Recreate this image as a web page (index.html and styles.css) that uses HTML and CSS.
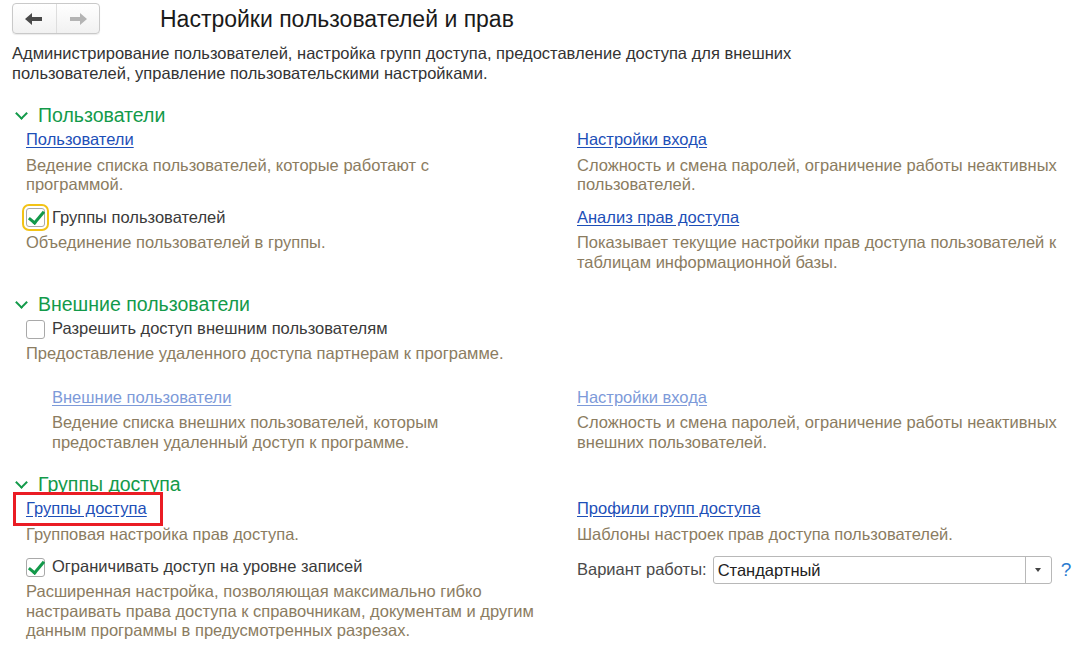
FILE: index.html
```html
<!DOCTYPE html>
<html lang="ru">
<head>
    <meta charset="UTF-8">
    <title>Настройки пользователей и прав</title>
    <link rel="stylesheet" href="styles.css">
</head>
<body>
    <div class="page">
        <div class="topbar">
            <div class="nav">
                <button class="nav-btn">
                    <svg width="18" height="12" viewBox="0 0 18 12"><path d="M0 6 L7 0 L7 4 L17 4 L17 8 L7 8 L7 12 Z" fill="#4a4a4a"/></svg>
                </button>
                <button class="nav-btn">
                    <svg width="18" height="12" viewBox="0 0 18 12"><path d="M18 6 L11 0 L11 4 L1 4 L1 8 L11 8 L11 12 Z" fill="#b4b4b4"/></svg>
                </button>
            </div>
            <h1>Настройки пользователей и прав</h1>
        </div>

        <p class="intro">Администрирование пользователей, настройка групп доступа, предоставление доступа для внешних<br>пользователей, управление пользовательскими настройками.</p>

        <!-- Пользователи -->
        <div class="group">
            <div class="group-title"><span class="chevron"></span>Пользователи</div>
            <div class="cols">
                <div class="col">
                    <div class="item">
                        <a href="#" class="link">Пользователи</a>
                        <p class="hint">Ведение списка пользователей, которые работают с<br>программой.</p>
                    </div>
                    <div class="item">
                        <label class="check focused">
                            <span class="box checked"></span>
                            Группы пользователей
                        </label>
                        <p class="hint">Объединение пользователей в группы.</p>
                    </div>
                </div>
                <div class="col">
                    <div class="item">
                        <a href="#" class="link">Настройки входа</a>
                        <p class="hint">Сложность и смена паролей, ограничение работы неактивных<br>пользователей.</p>
                    </div>
                    <div class="item">
                        <a href="#" class="link">Анализ прав доступа</a>
                        <p class="hint">Показывает текущие настройки прав доступа пользователей к<br>таблицам информационной базы.</p>
                    </div>
                </div>
            </div>
        </div>

        <!-- Внешние пользователи -->
        <div class="group">
            <div class="group-title"><span class="chevron"></span>Внешние пользователи</div>
            <div class="item wide">
                <label class="check">
                    <span class="box"></span>
                    Разрешить доступ внешним пользователям
                </label>
                <p class="hint">Предоставление удаленного доступа партнерам к программе.</p>
            </div>
            <div class="cols spaced">
                <div class="col indent">
                    <div class="item">
                        <a href="#" class="link disabled">Внешние пользователи</a>
                        <p class="hint">Ведение списка внешних пользователей, которым<br>предоставлен удаленный доступ к программе.</p>
                    </div>
                </div>
                <div class="col">
                    <div class="item">
                        <a href="#" class="link disabled">Настройки входа</a>
                        <p class="hint">Сложность и смена паролей, ограничение работы неактивных<br>внешних пользователей.</p>
                    </div>
                </div>
            </div>
        </div>

        <!-- Группы доступа -->
        <div class="group">
            <div class="group-title"><span class="chevron"></span>Группы доступа</div>
            <div class="cols">
                <div class="col">
                    <div class="item">
                        <a href="#" class="link marked">Группы доступа</a>
                        <p class="hint">Групповая настройка прав доступа.</p>
                    </div>
                    <div class="item">
                        <label class="check">
                            <span class="box checked"></span>
                            Ограничивать доступ на уровне записей
                        </label>
                        <p class="hint">Расширенная настройка, позволяющая максимально гибко<br>настраивать права доступа к справочникам, документам и другим<br>данным программы в предусмотренных разрезах.</p>
                    </div>
                </div>
                <div class="col">
                    <div class="item">
                        <a href="#" class="link">Профили групп доступа</a>
                        <p class="hint">Шаблоны настроек прав доступа пользователей.</p>
                    </div>
                    <div class="field">
                        <span class="field-label">Вариант работы:</span>
                        <div class="select">
                            <span class="select-value">Стандартный</span>
                            <span class="select-btn"></span>
                        </div>
                        <span class="help">?</span>
                    </div>
                </div>
            </div>
        </div>
    </div>
</body>
</html>
```

FILE: styles.css
```css
:root {
    --text-color: #333333;
    --hint-color: #8b7c61;
    --green: #139a4a;
    --link: #1d4fb8;
    --link-disabled: #7d9ad9;
}

* {
    margin: 0;
    padding: 0;
    box-sizing: border-box;
}

body {
    font-family: 'Liberation Sans', Arial, sans-serif;
    font-size: 16.5px;
    line-height: 19.5px;
    color: var(--text-color);
    background-color: white;
}

.page {
    padding: 3px 0 0 12px;
}

/* Top bar */
.topbar {
    display: flex;
    align-items: center;
}

.nav {
    display: flex;
    width: 88px;
    height: 31px;
    border: 1px solid #c9c9c9;
    border-radius: 4px;
    background: linear-gradient(#ffffff, #f1f1f1);
    box-shadow: 0 1px 1px rgba(0, 0, 0, 0.08);
}

.nav-btn {
    flex: 1;
    display: flex;
    align-items: center;
    justify-content: center;
    border: none;
    background: transparent;
}

.nav-btn + .nav-btn {
    border-left: 1px solid #dedede;
}

.topbar h1 {
    margin-left: 60px;
    font-size: 23px;
    font-weight: normal;
    color: #1a1a1a;
    line-height: 30px;
}

.intro {
    margin-top: 10px;
    white-space: nowrap;
}

/* Groups */
.group {
    margin-top: 20px;
}

.group-title {
    display: flex;
    align-items: center;
    font-size: 19.5px;
    line-height: 24px;
    color: var(--green);
}

.chevron {
    width: 9px;
    height: 9px;
    border-right: 2px solid var(--green);
    border-bottom: 2px solid var(--green);
    transform: rotate(45deg);
    margin: 0 12px 4px 5px;
}

.cols {
    display: grid;
    grid-template-columns: 551px 1fr;
    padding-left: 14px;
}

.cols.spaced {
    margin-top: 21px;
}

.col.indent {
    padding-left: 26px;
}

.item {
    margin-top: 12px;
}

.item:first-child {
    margin-top: 2px;
}

.item.wide {
    margin-top: 2px;
    padding-left: 14px;
}

.link {
    display: inline-block;
    position: relative;
    color: var(--link);
    text-decoration: underline;
    text-underline-offset: 2px;
    line-height: 20px;
}

.link.disabled {
    color: var(--link-disabled);
}

.link.marked::after {
    content: "";
    position: absolute;
    left: -13px;
    right: -16px;
    top: -6px;
    bottom: -8px;
    border: 3px solid #ea1c24;
}

.hint {
    margin-top: 6px;
    color: var(--hint-color);
    white-space: nowrap;
}

/* Checkboxes */
.check {
    display: flex;
    align-items: center;
    gap: 7px;
    height: 22px;
    color: #3a3a3a;
}

.check + .hint {
    margin-top: 4px;
}

.box {
    position: relative;
    width: 19px;
    height: 19px;
    border: 1px solid #a9a9a9;
    border-radius: 3px;
    background: white;
}

.check.focused .box {
    outline: 2px solid #f3c316;
    outline-offset: 2px;
}

.box.checked::after {
    content: "";
    position: absolute;
    left: 5px;
    top: -1px;
    width: 6px;
    height: 13px;
    border-right: 3.5px solid #13994a;
    border-bottom: 3.5px solid #13994a;
    transform: rotate(40deg);
}

/* Select field */
.field {
    display: flex;
    align-items: center;
    margin-top: 12px;
    white-space: nowrap;
}

.field-label {
    color: #4a4a4a;
    margin-right: 6px;
}

.select {
    display: flex;
    flex-shrink: 0;
    width: 339px;
    height: 28px;
    border: 1px solid #b8b8b8;
    border-radius: 3px;
}

.select-value {
    flex: 1;
    padding-left: 4px;
    line-height: 26px;
    color: #222;
}

.select-btn {
    width: 26px;
    border-left: 1px solid #b8b8b8;
    display: flex;
    align-items: center;
    justify-content: center;
}

.select-btn::after {
    content: "";
    border-left: 3.5px solid transparent;
    border-right: 3.5px solid transparent;
    border-top: 4px solid #444;
}

.help {
    margin-left: 9px;
    color: #2b7bd0;
    font-size: 19px;
}
```
